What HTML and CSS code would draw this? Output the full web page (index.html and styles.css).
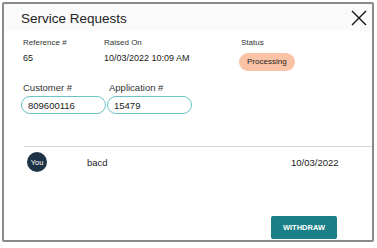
FILE: index.html
```html
<!DOCTYPE html>
<html lang="en">
<head>
    <meta charset="UTF-8">
    <meta name="viewport" content="width=device-width, initial-scale=1.0">
    <title>Service Requests</title>
    <link rel="stylesheet" href="styles.css">
</head>
<body>

    <div class="dialog">
        <div class="dialog-header">
            <h2 class="dialog-title">Service Requests</h2>
            <button class="close-btn" aria-label="Close">
                <svg width="16" height="16" viewBox="0 0 16 16">
                    <path d="M1 1 L15 15 M15 1 L1 15" stroke="#111" stroke-width="1.4" fill="none"/>
                </svg>
            </button>
        </div>

        <div class="info-row">
            <div class="info-col col-ref">
                <span class="info-label">Reference #</span>
                <span class="info-value">65</span>
            </div>
            <div class="info-col col-raised">
                <span class="info-label">Raised On</span>
                <span class="info-value">10/03/2022 10:09 AM</span>
            </div>
            <div class="info-col col-status">
                <span class="info-label">Status</span>
                <span class="status-pill">Processing</span>
            </div>
        </div>

        <div class="fields-row">
            <div class="field">
                <label for="customer">Customer #</label>
                <input type="text" id="customer" value="809600116">
            </div>
            <div class="field">
                <label for="application">Application #</label>
                <input type="text" id="application" value="15479">
            </div>
        </div>

        <div class="comments">
            <div class="comment-row">
                <span class="avatar">You</span>
                <span class="comment-text">bacd</span>
                <span class="comment-date">10/03/2022</span>
            </div>
        </div>

        <div class="dialog-footer">
            <button class="withdraw-btn">WITHDRAW</button>
        </div>
    </div>

</body>
</html>
```

FILE: styles.css
```css
/* General Page Styles */
body {
    font-family: "Liberation Sans", Arial, sans-serif;
    background-color: #fff;
    color: #222;
    margin: 0;
    padding: 2px 2px 0 2px;
}

/* Dialog Frame */
.dialog {
    width: 372px;
    height: 240px;
    border: 2px solid #8a8a8a;
    border-radius: 2px;
    box-sizing: border-box;
    display: flex;
    flex-direction: column;
    background-color: #fff;
}

.dialog-header {
    display: flex;
    justify-content: space-between;
    align-items: center;
    height: 27px;
    padding: 0 5px 0 17px;
    background-color: #fafafa;
}

.dialog-title {
    font-size: 13.5px;
    font-weight: normal;
    margin: 2px 0 0 0;
    color: #222;
}

.close-btn {
    background: none;
    border: none;
    padding: 0;
    width: 17px;
    height: 17px;
    margin-top: 1px;
    cursor: pointer;
}

/* Info Row */
.info-row {
    display: flex;
    padding: 7px 0 0 19px;
}

.info-col {
    display: flex;
    flex-direction: column;
}

.col-ref {
    width: 81px;
}

.col-raised {
    width: 137px;
}

.info-label {
    font-size: 8px;
    color: #333;
    line-height: 10px;
}

.info-value {
    font-size: 9px;
    margin-top: 4px;
    line-height: 12px;
}

.status-pill {
    margin-top: 5px;
    align-self: flex-start;
    background-color: #fbc3a6;
    font-size: 8px;
    line-height: 10px;
    padding: 4px 8px;
    border-radius: 10px;
    margin-left: -2px;
}

/* Input Fields */
.fields-row {
    display: flex;
    padding: 11px 0 0 17px;
    gap: 1px;
}

.field {
    display: flex;
    flex-direction: column;
}

.field label {
    font-size: 9.5px;
    padding-left: 2px;
    margin-bottom: 3px;
    color: #333;
}

.field input {
    width: 85px;
    height: 18px;
    border: 1.5px solid #6cc3c6;
    border-radius: 9px;
    padding: 0 6px;
    font-family: inherit;
    font-size: 9.5px;
    color: #222;
    box-sizing: border-box;
}

/* Comments */
.comments {
    margin: 32px 0 0 20px;
    border-top: 1.5px solid #d6d6d6;
}

.comment-row {
    display: flex;
    align-items: center;
    height: 30px;
    font-size: 9.5px;
}

.avatar {
    width: 20px;
    height: 20px;
    border-radius: 50%;
    background-color: #1f3347;
    color: #fff;
    font-size: 7.5px;
    display: flex;
    align-items: center;
    justify-content: center;
    margin-left: 3px;
}

.comment-text {
    margin-left: 40px;
    width: 204px;
}

/* Footer */
.dialog-footer {
    margin-top: auto;
    display: flex;
    justify-content: flex-end;
    padding: 0 35px 1px 0;
}

.withdraw-btn {
    background-color: #1b7f88;
    color: #fff;
    border: none;
    border-radius: 2px;
    font-family: inherit;
    font-size: 7.5px;
    font-weight: bold;
    width: 66px;
    height: 23px;
    cursor: pointer;
}
```
